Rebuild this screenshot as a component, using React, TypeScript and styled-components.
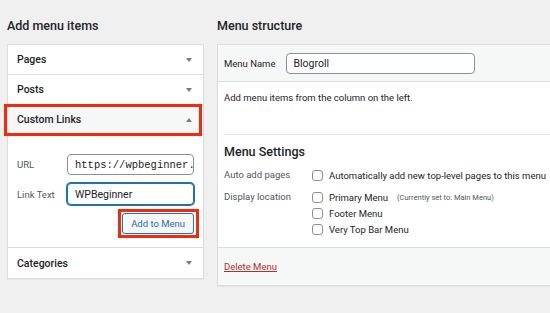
import React from 'react';
import styled, { createGlobalStyle } from 'styled-components';

const GlobalStyle = createGlobalStyle`
  html, body {
    margin: 0;
    padding: 0;
    background: #f0f0f1;
  }
  body {
    font-family: Roboto, "Noto Sans", sans-serif;
    color: #1d2327;
  }
  * { box-sizing: border-box; }
`;

const Page = styled.div`
  width: 550px;
  height: 313px;
  overflow: hidden;
  display: flex;
  gap: 13px;
  padding-left: 7px;
`;

const Column = styled.div<{ $width: number }>`
  flex: none;
  width: ${p => p.$width}px;
`;

const Title = styled.h2`
  margin: 0;
  height: 44px;
  padding-top: 6px;
  display: flex;
  align-items: center;
  font-size: 12.5px;
  font-weight: 500;
`;

const Panel = styled.div`
  background: #fff;
  border: 1px solid #dcdcde;
  box-shadow: 0 1px 1px rgba(0, 0, 0, 0.04);
`;

const SectionHead = styled.div<{ $open?: boolean; $highlight?: boolean; $last?: boolean }>`
  position: relative;
  height: 30px;
  padding: 0 9px;
  display: flex;
  align-items: center;
  justify-content: space-between;
  font-size: 10.5px;
  font-weight: 500;
  background: ${p => (p.$open ? '#f6f7f7' : '#fff')};
  border-bottom: ${p => (p.$last ? 'none' : '1px solid #dcdcde')};

  ${p =>
    p.$highlight &&
    `
    &::after {
      content: "";
      position: absolute;
      left: -4px;
      right: 1px;
      top: -1px;
      bottom: -2px;
      border: 3px solid #f42a0c;
    }
  `}
`;

const Arrow = styled.span<{ $up?: boolean }>`
  width: 0;
  height: 0;
  margin-right: 2px;
  border-left: 3.5px solid transparent;
  border-right: 3.5px solid transparent;
  ${p => (p.$up ? 'border-bottom' : 'border-top')}: 4px solid #787c82;
`;

const SectionBody = styled.div`
  padding: 19px 9px 13px 9px;
  border-bottom: 1px solid #dcdcde;
  display: flex;
  flex-direction: column;
  gap: 8px;
`;

const FieldRow = styled.div`
  display: grid;
  grid-template-columns: 50px 1fr;
  align-items: center;
`;

const FieldLabel = styled.label`
  font-size: 9.5px;
  color: #50575e;
`;

const TextInput = styled.div<{ $mono?: boolean; $focus?: boolean; $height?: number }>`
  height: ${p => p.$height ?? 21}px;
  border: 1px solid ${p => (p.$focus ? '#2271b1' : '#8c8f94')};
  box-shadow: ${p => (p.$focus ? '0 0 0 1px #2271b1' : 'none')};
  border-radius: 4px;
  background: #fff;
  padding: 0 7px;
  display: flex;
  align-items: center;
  overflow: hidden;
  white-space: nowrap;
  font-size: 10.5px;
  font-family: ${p => (p.$mono ? '"Liberation Mono", "DejaVu Sans Mono", monospace' : 'inherit')};
  color: #1d2327;
`;

const ButtonRow = styled.div`
  display: flex;
  justify-content: flex-end;
`;

const SecondaryButton = styled.button<{ $highlight?: boolean }>`
  position: relative;
  height: 21px;
  padding: 0 8px;
  border: 1px solid #2271b1;
  border-radius: 3px;
  background: #f6f7f7;
  color: #2271b1;
  font-family: inherit;
  font-size: 9.5px;

  ${p =>
    p.$highlight &&
    `
    &::after {
      content: "";
      position: absolute;
      left: -5px;
      right: -6px;
      top: -5px;
      bottom: -5px;
      border: 3px solid #f42a0c;
    }
  `}
`;

const MenuHead = styled.div`
  height: 37px;
  padding: 0 6px;
  background: #f6f7f7;
  border-bottom: 1px solid #dcdcde;
  display: flex;
  align-items: center;
  gap: 10px;
  font-size: 9.5px;
`;

const MenuBody = styled.div`
  padding: 9px 6px 0 6px;
  height: 166px;
  border-bottom: 1px solid #dcdcde;
`;

const Hint = styled.p`
  margin: 0;
  font-size: 9.5px;
  line-height: 13px;
`;

const Separator = styled.hr`
  margin: 30px 0 0 0;
  border: none;
  border-top: 1px solid #e5e5e5;
`;

const SettingsTitle = styled.h3`
  margin: 0;
  height: 32px;
  display: flex;
  align-items: center;
  font-size: 12.5px;
  font-weight: 500;
`;

const SettingRow = styled.div<{ $gap?: number }>`
  display: grid;
  grid-template-columns: 88px 1fr;
  margin-top: ${p => p.$gap ?? 0}px;
`;

const SettingLabel = styled.div`
  font-size: 9.5px;
  color: #50575e;
  line-height: 16px;
`;

const OptionList = styled.div`
  display: flex;
  flex-direction: column;
`;

const Option = styled.label`
  display: flex;
  align-items: center;
  gap: 6px;
  height: 16px;
  font-size: 9.5px;
  white-space: nowrap;
`;

const Checkbox = styled.span`
  flex: none;
  width: 11px;
  height: 11px;
  border: 1px solid #8c8f94;
  border-radius: 3px;
  background: #fff;
`;

const Note = styled.span`
  font-size: 7.5px;
  color: #50575e;
  margin-left: 3px;
`;

const MenuFoot = styled.div`
  height: 37px;
  padding: 0 6px;
  background: #f6f7f7;
  display: flex;
  align-items: center;
`;

const DangerLink = styled.a`
  font-size: 9.5px;
  color: #b32d2e;
  text-decoration: underline;
`;

const sections = [{ name: 'Pages' }, { name: 'Posts' }];

export default function App() {
  return (
    <>
      <GlobalStyle />
      <Page>
        <Column $width={197}>
          <Title>Add menu items</Title>
          <Panel>
            {sections.map(s => (
              <SectionHead key={s.name}>
                {s.name}
                <Arrow />
              </SectionHead>
            ))}
            <SectionHead $open $highlight>
              Custom Links
              <Arrow $up />
            </SectionHead>
            <SectionBody>
              <FieldRow>
                <FieldLabel>URL</FieldLabel>
                <TextInput $mono>https://wpbeginner.com</TextInput>
              </FieldRow>
              <FieldRow>
                <FieldLabel>Link Text</FieldLabel>
                <TextInput $focus $height={22}>WPBeginner</TextInput>
              </FieldRow>
              <ButtonRow>
                <SecondaryButton $highlight>Add to Menu</SecondaryButton>
              </ButtonRow>
            </SectionBody>
            <SectionHead $last>
              Categories
              <Arrow />
            </SectionHead>
          </Panel>
        </Column>
        <Column $width={420}>
          <Title>Menu structure</Title>
          <Panel>
            <MenuHead>
              <span>Menu Name</span>
              <TextInput style={{ width: 189 }}>Blogroll</TextInput>
            </MenuHead>
            <MenuBody>
              <Hint>Add menu items from the column on the left.</Hint>
              <Separator />
              <SettingsTitle>Menu Settings</SettingsTitle>
              <SettingRow>
                <SettingLabel>Auto add pages</SettingLabel>
                <OptionList>
                  <Option>
                    <Checkbox />
                    Automatically add new top-level pages to this menu
                  </Option>
                </OptionList>
              </SettingRow>
              <SettingRow $gap={6}>
                <SettingLabel>Display location</SettingLabel>
                <OptionList>
                  <Option>
                    <Checkbox />
                    Primary Menu<Note>(Currently set to: Main Menu)</Note>
                  </Option>
                  <Option>
                    <Checkbox />
                    Footer Menu
                  </Option>
                  <Option>
                    <Checkbox />
                    Very Top Bar Menu
                  </Option>
                </OptionList>
              </SettingRow>
            </MenuBody>
            <MenuFoot>
              <DangerLink href="#">Delete Menu</DangerLink>
            </MenuFoot>
          </Panel>
        </Column>
      </Page>
    </>
  );
}
